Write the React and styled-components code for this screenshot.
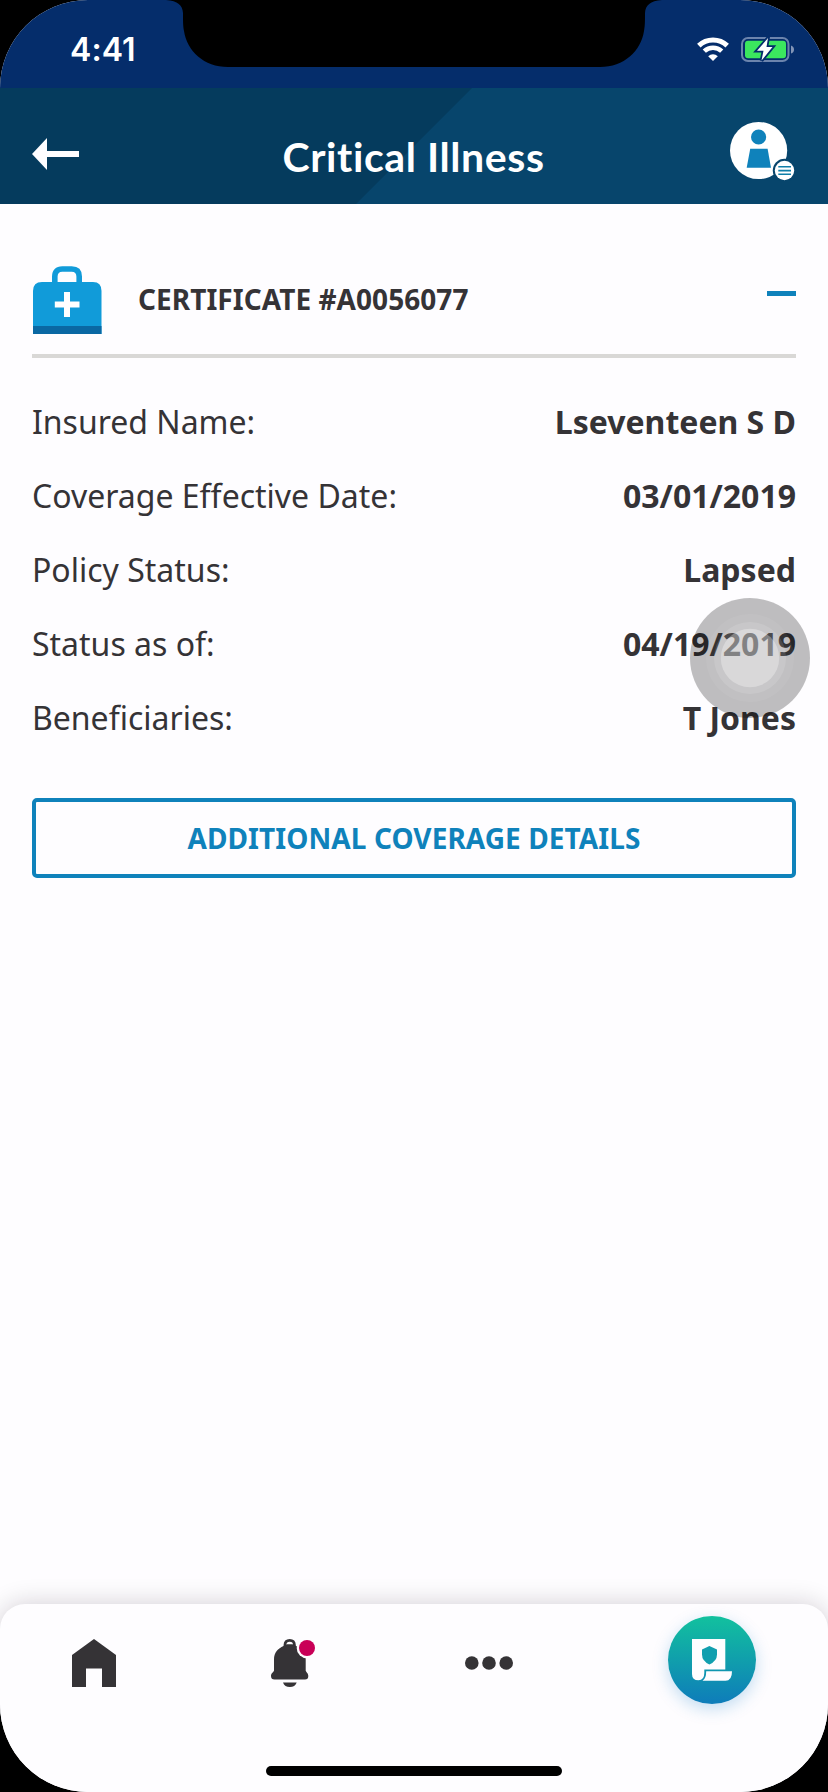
import React from "react";
import styled, { createGlobalStyle } from "styled-components";

const Global = createGlobalStyle`
  * { box-sizing: border-box; }
  body { margin: 0; background: #000; }
`;

const Screen = styled.div`
  position: relative;
  display: flex;
  flex-direction: column;
  width: 828px;
  height: 1792px;
  overflow: hidden;
  border-radius: 88px;
  background: #fefdff;
  color: #353336;
  font-family: "Noto Sans", sans-serif;
`;

const StatusBar = styled.div`
  display: flex;
  justify-content: space-between;
  align-items: flex-start;
  height: 88px;
  padding: 37px 34px 0 70px;
  background: #052d6b;
`;

const Clock = styled.span`
  margin-top: 1px;
  font: 600 32px/24px Inter, sans-serif;
  letter-spacing: 0.1px;
  color: #fff;
`;

const StatusIcons = styled.div`
  display: flex;
  gap: 12px;
`;

const Notch = styled.svg`
  position: absolute;
  top: 0;
  left: 166px;
`;

const Header = styled.header`
  position: relative;
  display: flex;
  justify-content: space-between;
  align-items: flex-start;
  height: 116px;
  padding: 33px 32px 0;
  background: #053b5d;

  &::before {
    content: "";
    position: absolute;
    inset: 0;
    background: #07456c;
    clip-path: polygon(472px 0, 100% 0, 100% 100%, 356px 100%);
  }
`;

const IconButton = styled.button`
  position: relative;
  display: flex;
  padding: ${(p) => p.$top || 0}px 0 0;
  border: 0;
  background: none;
`;

const Title = styled.h1`
  position: relative;
  margin: 12px 0 0 18px;
  font: 700 41px/48px Lato, sans-serif;
  letter-spacing: 0.6px;
  font-variant-ligatures: none;
  color: #fff;
  white-space: nowrap;
`;

const Content = styled.main`
  flex: 1;
  padding: 62px 32px 0;
`;

const CertificateBar = styled.div`
  display: flex;
  align-items: flex-start;
  height: 92px;
  border-bottom: 4px solid #d9d8d6;
`;

const CertificateTitle = styled.h2`
  flex: 1;
  margin: 13px 0 0 36px;
  font-size: 28px;
  line-height: 40px;
  font-weight: 700;
  letter-spacing: 0.05px;
`;

const Collapse = styled.span`
  width: 29px;
  height: 5px;
  margin-top: 24.5px;
  background: #0f82bb;
`;

const Details = styled.dl`
  margin: 27px 0 43px;
`;

const DetailRow = styled.div`
  display: flex;
  justify-content: space-between;
  font-size: 32px;
  line-height: 74px;
`;

const Label = styled.dt``;

const Value = styled.dd`
  margin: 0;
  font-weight: 700;
`;

const OutlineButton = styled.button`
  width: 100%;
  height: 80px;
  padding: 0 0 1px;
  border: 4px solid #0f82bb;
  border-radius: 5px;
  background: transparent;
  color: #0f82bb;
  font: 700 28px/40px "Noto Sans", sans-serif;
  letter-spacing: 0.08px;
`;

const TabBar = styled.nav`
  display: flex;
  justify-content: space-between;
  align-items: flex-start;
  height: 122px;
  padding: 12px 72px 0;
  border-radius: 25px 25px 0 0;
  background: #fefdff;
  box-shadow: 0 0 26px rgba(20, 10, 25, 0.19);
`;

const TabIcon = styled.a`
  display: flex;
  padding-top: 23px;
`;

const ActiveTab = styled.a`
  display: flex;
  justify-content: center;
  width: 88px;
  height: 88px;
  padding-top: 23px;
  border-radius: 50%;
  background: linear-gradient(#12c19e, #0e7cba);
  box-shadow: 0 5px 16px rgba(15, 125, 200, 0.25);
`;

const HomeArea = styled.div`
  position: relative;
  display: flex;
  justify-content: center;
  height: 66px;
  padding-top: 40px;
  background: #fefdff;
`;

const HomeIndicator = styled.div`
  width: 296px;
  height: 10px;
  border-radius: 5px;
  background: #000;
`;

const TouchButton = styled.svg`
  position: absolute;
  left: 690px;
  top: 598px;
`;

const details = [
  ["Insured Name:", "Lseventeen S D"],
  ["Coverage Effective Date:", "03/01/2019"],
  ["Policy Status:", "Lapsed"],
  ["Status as of:", "04/19/2019"],
  ["Beneficiaries:", "T Jones"],
];

const WifiIcon = () => (
  <svg width="32" height="25" viewBox="0 0 32 25" fill="none" stroke="#fff">
    <path d="M1.8 8.6A20.5 20.5 0 0 1 30.2 8.6" strokeWidth="5" />
    <path d="M7.3 14.2A12.6 12.6 0 0 1 24.7 14.2" strokeWidth="4.6" />
    <path d="M11.2 19.2A7 7 0 0 1 20.8 19.2L16 24Z" fill="#fff" stroke="none" />
  </svg>
);

const BatteryIcon = () => (
  <svg width="53" height="25" viewBox="0 0 53 25">
    <rect x="1" y="1" width="46.5" height="23" rx="6" fill="none" stroke="#6c84ad" strokeWidth="2" />
    <path d="M50 8.5Q53 9.5 53 12.5T50 16.5Z" fill="#8294b6" />
    <rect x="4" y="3.8" width="41" height="17.4" rx="3" fill="#3be75e" />
    <path
      d="M27 1L16 13.8H22.5L20.5 23.5L31.5 10H25.5Z"
      fill="#fff"
      stroke="#052d6b"
      strokeWidth="3.6"
      paintOrder="stroke"
    />
  </svg>
);

const BackIcon = () => (
  <svg width="47" height="32" viewBox="0 0 47 32" fill="#fefdff">
    <path d="M0 16L15 0V13H47V19H15V32Z" />
  </svg>
);

const ProfileIcon = () => (
  <svg width="66" height="60" viewBox="0 0 66 60">
    <circle cx="28.6" cy="29.5" r="28.6" fill="#fff" />
    <circle cx="28.6" cy="16" r="7.6" fill="#0f82bb" />
    <path d="M20.2 27.7H37.6L41 46.7H16.7Z" fill="#0f82bb" />
    <circle cx="54.5" cy="49.5" r="11.7" fill="#07456c" />
    <circle cx="54.5" cy="49.5" r="9.7" fill="#fff" />
    <path d="M48.3 45.7H61M48.3 49.6H61M48.3 53.3H61" stroke="#0f7ea8" strokeWidth="1.6" />
  </svg>
);

const FirstAidIcon = () => (
  <svg width="70" height="68" viewBox="0 0 70 68">
    <path d="M22.3 17V10.5Q22.3 3 29.8 3H39.2Q46.7 3 46.7 10.5V17" transform="translate(.5)" fill="none" stroke="#119bd9" strokeWidth="5.6" />
    <path d="M1 68V25Q1 16 10 16H61Q69.500 16 69.500 25V68Z" fill="#119bd9" />
    <path d="M1 60H69.500V68H1Z" fill="#0a68a3" />
    <path d="M32 26H38V35.500H47.500V41.500H38V51H32V41.500H22.800V35.500H32Z" fill="#fff" />
  </svg>
);

const HomeIcon = () => (
  <svg width="44" height="48" viewBox="0 0 44 48" fill="#353336">
    <path d="M22 0L44 16V48H30V29.5H14V48H0V16Z" />
  </svg>
);

const BellShape = styled.svg`
  overflow: visible;
`;

const BellIcon = () => (
  <BellShape width="38" height="48" viewBox="0 0 38 48">
    <path d="M14 8V6Q14 1.300 18.700 1.300T23.400 6V8" fill="none" stroke="#353336" strokeWidth="2.800" />
    <path
      d="M3 20.500C3 13.500 7 9.500 12.500 7L16 5.200H21.500L25 7C31 9.500 34.700 13.500 34.700 20.500V31.500C34.700 33 37.300 34 37.300 37Q37.300 40.500 34 40.500H3.500Q0 40.500 0 37C0 34 3 33 3 31.500Z"
      fill="#353336"
    />
    <path d="M12 43.500H25.700Q24 48 18.800 48T12 43.500Z" fill="#353336" />
    <circle cx="36" cy="9" r="10.300" fill="#fefdff" />
    <circle cx="36" cy="9" r="8" fill="#c90057" />
  </BellShape>
);

const MoreIcon = () => (
  <svg width="48" height="48" viewBox="0 0 48 48" fill="#353336">
    <circle cx="6.8" cy="24" r="6.8" />
    <circle cx="24" cy="24" r="6.8" />
    <circle cx="41.2" cy="24" r="6.8" />
  </svg>
);

const PolicyIcon = () => (
  <svg width="40" height="42" viewBox="0 0 40 42" fill="#fefdff">
    <path d="M0 0H33.3V30.5H12.3V34Q12.3 41.3 6.5 41.3Q0 41.3 0 35Z" />
    <path d="M14.2 32.2H40Q40 41.8 33.5 41.8H10.5Q14.2 39.5 14.2 32.2Z" />
    <path d="M17.4 7L25 10.5V15.5Q25 22 17.4 25.5Q10 22 10 15.5V10.5Z" fill="#119faf" />
  </svg>
);

export default function App() {
  return (
    <>
      <Global />
      <Screen>
        <StatusBar>
          <Clock>4:41</Clock>
          <StatusIcons>
            <WifiIcon />
            <BatteryIcon />
          </StatusIcons>
        </StatusBar>
        <Notch width="496" height="67" viewBox="0 0 496 67">
          <path d="M0 0C12 1 16.5 5 17 13C17 21 17 26 18 31C21 51 38 67 62 67H434C458 67 475 51 478 31C479 26 479 21 479 13C479.500 5 484 1 496 0Z" />
        </Notch>
        <Header>
          <IconButton $top={17} aria-label="Back">
            <BackIcon />
          </IconButton>
          <Title>Critical Illness</Title>
          <IconButton aria-label="Profile">
            <ProfileIcon />
          </IconButton>
        </Header>
        <Content>
          <CertificateBar>
            <FirstAidIcon />
            <CertificateTitle>CERTIFICATE #A0056077</CertificateTitle>
            <Collapse />
          </CertificateBar>
          <Details>
            {details.map(([label, value]) => (
              <DetailRow key={label}>
                <Label>{label}</Label>
                <Value>{value}</Value>
              </DetailRow>
            ))}
          </Details>
          <OutlineButton>ADDITIONAL COVERAGE DETAILS</OutlineButton>
        </Content>
        <TabBar>
          <TabIcon>
            <HomeIcon />
          </TabIcon>
          <TabIcon>
            <BellIcon />
          </TabIcon>
          <TabIcon>
            <MoreIcon />
          </TabIcon>
          <ActiveTab>
            <PolicyIcon />
          </ActiveTab>
        </TabBar>
        <HomeArea>
          <HomeIndicator />
        </HomeArea>
        <TouchButton width="120" height="120" viewBox="0 0 120 120">
          <circle cx="60" cy="60" r="60" fill="#000" fillOpacity=".25" />
          <circle cx="60" cy="60" r="44" fill="#fff" fillOpacity=".06" />
          <circle cx="60" cy="60" r="36" fill="#fff" fillOpacity=".12" />
          <circle cx="60" cy="60" r="29.2" fill="#fff" fillOpacity=".31" />
        </TouchButton>
      </Screen>
    </>
  );
}
